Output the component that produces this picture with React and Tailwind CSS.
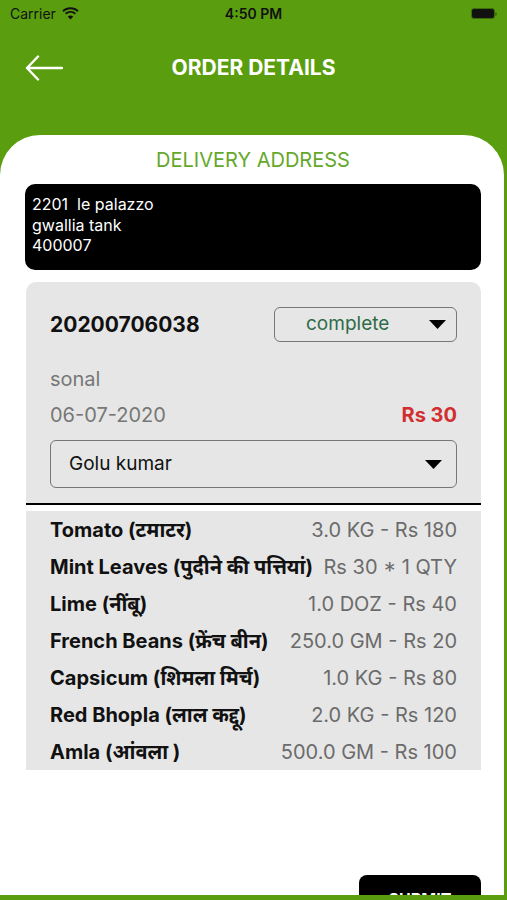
import { useState } from "react";

const items = [
  { name: "Tomato (टमाटर)", qty: "3.0 KG - Rs 180" },
  { name: "Mint Leaves (पुदीने की पत्तियां)", qty: "Rs 30 * 1 QTY" },
  { name: "Lime (नींबू)", qty: "1.0 DOZ - Rs 40" },
  { name: "French Beans (फ्रेंच बीन)", qty: "250.0 GM - Rs 20" },
  { name: "Capsicum (शिमला मिर्च)", qty: "1.0 KG - Rs 80" },
  { name: "Red Bhopla (लाल कद्दू)", qty: "2.0 KG - Rs 120" },
  { name: "Amla (आंवला )", qty: "500.0 GM - Rs 100" },
];

function Caret() {
  return (
    <svg width="17" height="9" viewBox="0 0 17 9">
      <path d="M0 0 L17 0 L8.5 9 Z" fill="#000" />
    </svg>
  );
}

function StatusBar() {
  return (
    <div className="h-[27px] shrink-0 flex items-center justify-between px-[10px] text-[#111]">
      <div className="flex items-center gap-[6px] w-[120px]">
        <span className="text-[14px]">Carrier</span>
        <svg width="17" height="13" viewBox="0 0 17 13">
          <path d="M8.5 2.2c2.6 0 5 1 6.8 2.7l1.3-1.4C14.5 1.5 11.6.3 8.5.3S2.5 1.5.4 3.5l1.3 1.4C3.5 3.2 5.9 2.2 8.5 2.2z" fill="#111" />
          <path d="M8.5 5.8c1.6 0 3.1.6 4.2 1.7l1.3-1.4C12.6 4.7 10.6 3.9 8.5 3.9S4.4 4.7 3 6.1l1.3 1.4C5.4 6.4 6.9 5.8 8.5 5.8z" fill="#111" />
          <path d="M8.5 12.5l2.8-3c-.7-.7-1.7-1.1-2.8-1.1s-2.1.4-2.8 1.1z" fill="#111" />
        </svg>
      </div>
      <span className="text-[14px] font-semibold">4:50 PM</span>
      <div className="w-[120px] flex justify-end">
        <div className="flex items-center">
          <div className="w-[24px] h-[11px] rounded-[3px] bg-[#111] border border-[#3d6e0a]"></div>
          <div className="w-[2px] h-[4px] bg-[#3d6e0a] rounded-r-sm"></div>
        </div>
      </div>
    </div>
  );
}

export default function App() {
  const [status] = useState("complete");
  const [driver] = useState("Golu kumar");

  return (
    <div
      className="w-[507px] h-[900px] flex flex-col bg-[#5a9e0f] overflow-hidden"
      style={{ fontFamily: "Inter, 'Liberation Sans', 'Noto Sans', sans-serif" }}
    >
      <StatusBar />

      {/* Header */}
      <div className="h-[108px] shrink-0 flex items-start pt-[27px] px-[25px] relative">
        <svg width="38" height="26" viewBox="0 0 38 26" className="mt-[1px]">
          <path d="M37 13 H2 M13 1.5 L2 13 L13 24.5" stroke="#fff" strokeWidth="2.4" fill="none" strokeLinecap="round" strokeLinejoin="round" />
        </svg>
        <div className="absolute left-0 right-0 top-[27px] text-center text-white font-bold text-[21px] leading-[28px] pointer-events-none">
          ORDER DETAILS
        </div>
      </div>

      {/* Card */}
      <div className="flex-1 min-h-0 mr-[3px] mb-[5px] bg-white rounded-t-[40px] overflow-hidden flex flex-col pl-[25px] pr-[23px]">
        <div className="shrink-0 text-center text-[#64a82a] text-[20px] leading-[24px] pt-[13px]">
          DELIVERY ADDRESS
        </div>

        <div className="shrink-0 mt-[12px] h-[86px] bg-black rounded-[10px] px-[7px] pt-[10px] text-white text-[16px] leading-[20.5px]">
          <div className="whitespace-pre">2201  le palazzo</div>
          <div>gwallia tank</div>
          <div>400007</div>
        </div>

        {/* Order block */}
        <div className="shrink-0 mt-[12px] ml-[1px]">
          <div className="bg-[#e6e6e6] rounded-t-[10px] px-[24px] pt-[25px] pb-[15px] border-b-2 border-black">
            <div className="flex items-center justify-between h-[35px]">
              <span className="text-[21px] font-bold text-[#111]">20200706038</span>
              <div className="w-[183px] h-[35px] border border-[#777] rounded-[6px] flex items-center justify-between pl-[31px] pr-[10px]">
                <span className="text-[19px] text-[#2f6b48]">{status}</span>
                <Caret />
              </div>
            </div>
            <div className="mt-[25px] text-[20px] leading-[24px] text-[#777]">sonal</div>
            <div className="mt-[12px] flex items-center justify-between text-[20px] leading-[24px]">
              <span className="text-[#777]">06-07-2020</span>
              <span className="font-bold text-[#d12f2f]">Rs 30</span>
            </div>
            <div className="mt-[13px] h-[48px] border border-[#777] rounded-[6px] flex items-center justify-between pl-[18px] pr-[14px]">
              <span className="text-[19px] text-[#111]">{driver}</span>
              <Caret />
            </div>
          </div>

          <div className="mt-[6px] bg-[#e6e6e6] px-[24px]">
            {items.map((item) => (
              <div key={item.name} className="h-[37px] flex items-center justify-between text-[20px] whitespace-nowrap">
                <span className="font-bold text-[#111]">{item.name}</span>
                <span className="text-[#6b6b6b]">{item.qty}</span>
              </div>
            ))}
          </div>
        </div>

        <div className="shrink-0 mt-[105px] flex justify-end">
          <button className="w-[122px] h-[48px] bg-black rounded-[8px] text-white font-bold text-[16px]">
            SUBMIT
          </button>
        </div>
      </div>
    </div>
  );
}
